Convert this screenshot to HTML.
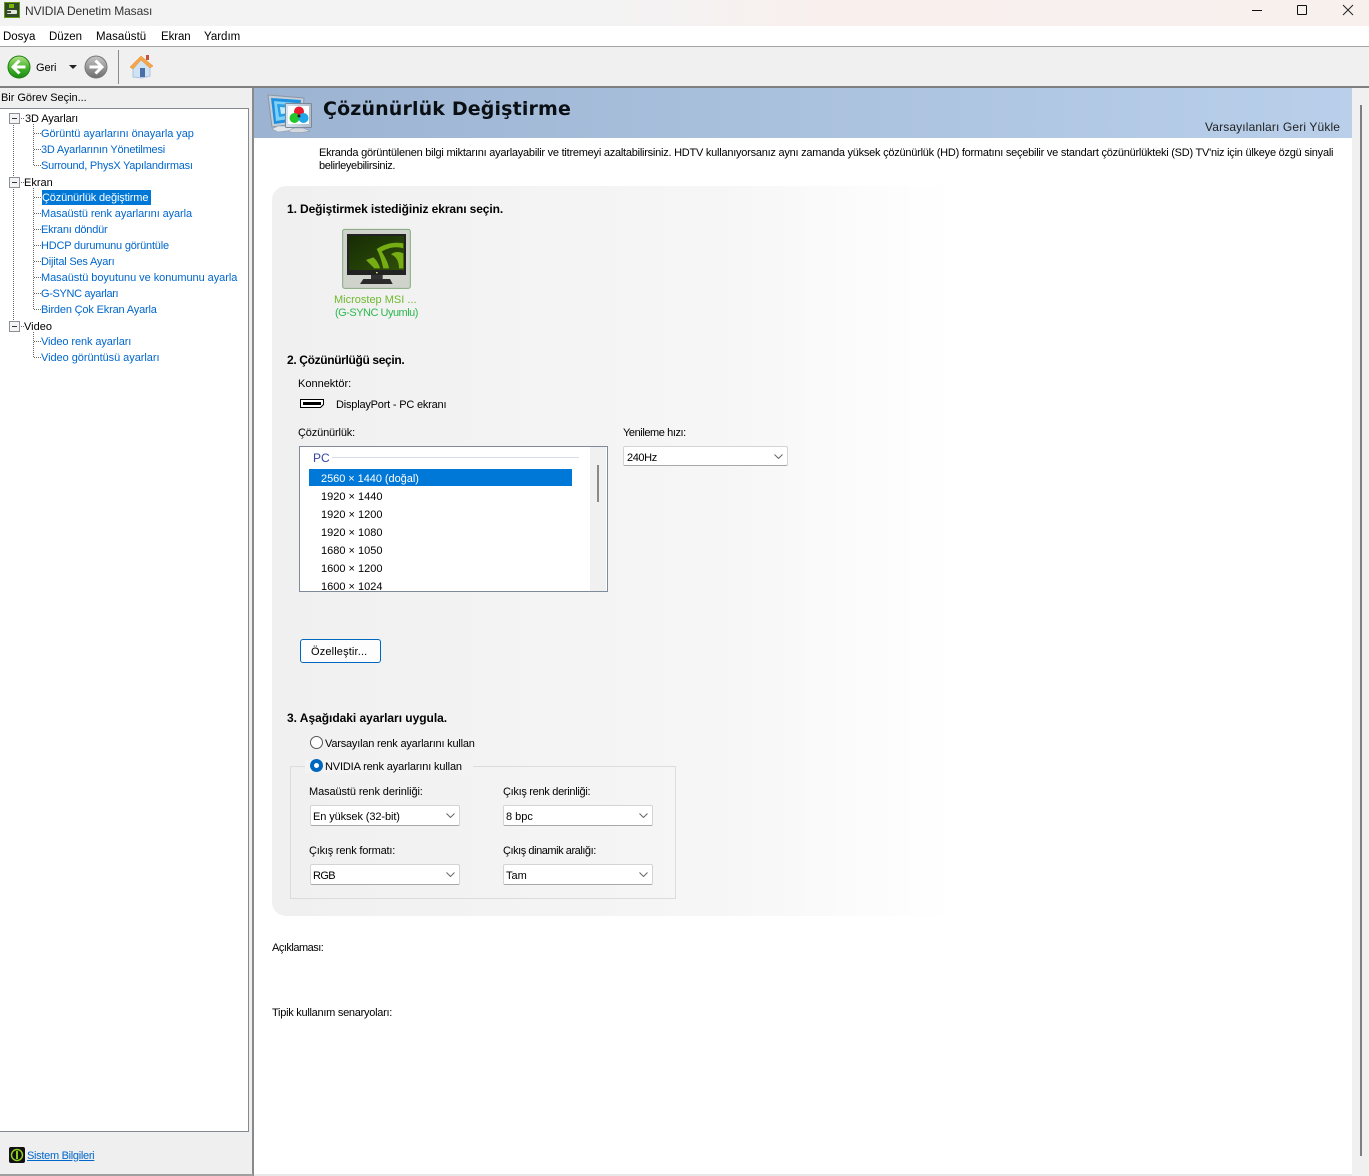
<!DOCTYPE html>
<html lang="tr"><head><meta charset="utf-8"><title>NVIDIA Denetim Masası</title>
<style>
html,body{margin:0;padding:0}
body{width:1369px;height:1176px;position:relative;overflow:hidden;background:#fff;font-family:"Liberation Sans",sans-serif;font-size:11px;color:#000}
div,a,svg{position:absolute}
.t{white-space:nowrap;line-height:16px;height:14px}
.b{color:#0066cc}
.m{font-size:11.500px}
.h{font-size:12px;font-weight:bold;letter-spacing:-.1px;line-height:14px}
.sel{background:#fff;border:1px solid #d4d4d4;border-bottom-color:#a8a8a8;border-radius:2px;height:20px;box-sizing:border-box}
.sel span{position:absolute;left:2px;top:4px;line-height:14px;white-space:nowrap}
.sel svg{right:4px;top:7px}
.dot{border-left:1px dotted #666}
.dh{border-top:1px dotted #666;height:0}
.pm{width:9px;height:9px;border:1px solid #8a8f98;background:#f4f4f4;box-sizing:content-box}
.pm:after{content:"";position:absolute;left:2px;top:4px;width:5px;height:1px;background:#333}
</style></head><body>
<!-- title bar -->
<div style="left:0;top:0;width:1369px;height:26px;background:linear-gradient(90deg,#f3f3f3 0,#f3f3f3 45%,#f9f0ee 60%,#f8f0ed 100%)"></div>
<svg style="left:4px;top:2px" width="16" height="16" viewBox="0 0 16 16"><rect x=".5" y=".5" width="15" height="15" fill="#33472a" stroke="#5f9a12"/><rect x="5" y="2" width="5" height="4" fill="#76b900"/><rect x="3" y="8" width="10" height="4" rx="1" fill="#dfe8d8"/><rect x="3" y="9" width="4" height="2" fill="#444"/></svg>
<div class="t" style="left:25px;top:4px;color:#333;font-size:12px;letter-spacing:-.1px;line-height:14px">NVIDIA Denetim Masası</div>
<div style="left:1252px;top:10px;width:10px;height:1px;background:#111"></div>
<div style="left:1297px;top:5px;width:8px;height:8px;border:1px solid #111;border-radius:1px"></div>
<svg style="left:1342px;top:4px" width="12" height="12" viewBox="0 0 12 12"><path d="M1 1L11 11M11 1L1 11" stroke="#222" stroke-width="1"/></svg>
<!-- menu -->
<div style="left:0;top:26px;width:1369px;background:#fff;border-bottom:1px solid #a4a4a4;box-sizing:border-box;height:21px"></div>
<div class="t m" style="left:3px;top:29px;letter-spacing:-.05px">Dosya</div>
<div class="t m" style="left:49px;top:29px;letter-spacing:-.05px">Düzen</div>
<div class="t m" style="left:96px;top:29px;letter-spacing:.05px">Masaüstü</div>
<div class="t m" style="left:161px;top:29px;letter-spacing:-.1px">Ekran</div>
<div class="t m" style="left:204px;top:29px">Yardım</div>
<!-- toolbar -->
<div style="left:0;top:47px;width:1369px;height:39px;background:#f0f0f0"></div>
<div style="left:0;top:86px;width:1369px;height:2px;background:#808080"></div>
<svg style="left:7px;top:55px" width="24" height="24" viewBox="0 0 24 24"><defs><linearGradient id="g" x1="0" y1="0" x2="0" y2="1"><stop offset="0" stop-color="#b4e48a"/><stop offset=".5" stop-color="#4ab52d"/><stop offset="1" stop-color="#178a12"/></linearGradient><linearGradient id="gr" x1="0" y1="0" x2="0" y2="1"><stop offset="0" stop-color="#c6c6c6"/><stop offset="1" stop-color="#6e6e6e"/></linearGradient><linearGradient id="scr" x1="0" y1="0" x2="1" y2="1"><stop offset="0" stop-color="#162c04"/><stop offset="1" stop-color="#2f4f0a"/></linearGradient><linearGradient id="bz" x1="0" y1="0" x2="1" y2="0"><stop offset="0" stop-color="#d8e6f2"/><stop offset="1" stop-color="#aebccb"/></linearGradient></defs><circle cx="12" cy="12" r="11" fill="url(#g)" stroke="#238018"/><path d="M12.500 5.500L6 12l6.500 6.500M6.500 12H18.500" fill="none" stroke="#fff" stroke-width="3"/></svg>
<div class="t" style="left:36px;top:60px;letter-spacing:-.1px">Geri</div>
<svg style="left:69px;top:65px" width="8" height="4"><path d="M0 0H8L4 4Z" fill="#222"/></svg>
<svg style="left:84px;top:55px" width="24" height="24" viewBox="0 0 24 24"><circle cx="12" cy="12" r="11" fill="url(#gr)" stroke="#777"/><path d="M11.500 5.500L18 12l-6.500 6.500M17.500 12H5.500" fill="none" stroke="#fff" stroke-width="3"/></svg>
<div style="left:118px;top:50px;width:1px;height:34px;background:#8a8a8a"></div>
<svg style="left:129px;top:54px" width="25" height="25" viewBox="0 0 25 25"><path d="M4 12V23L13 24L21 22V12L12.500 4Z" fill="#cfe3f5" stroke="#a9c4dc"/><path d="M1 13L12 2L24 12L21 14L12 6L4 15Z" fill="#f5a54a" stroke="#e0892e" stroke-width=".5"/><rect x="11" y="14" width="5" height="9" fill="#4a6ea8"/><rect x="17" y="1" width="3" height="5" fill="#c9503a"/></svg>
<!-- left pane -->
<div style="left:0;top:88px;width:253px;height:1088px;background:#efefef"></div>
<div class="t" style="left:1px;top:90px;letter-spacing:-.03px">Bir Görev Seçin...</div>
<div style="left:-1px;top:108px;width:248px;height:1022px;background:#fff;border:1px solid #858990"></div>
<div style="left:252px;top:88px;width:2px;height:1088px;background:#8a8a8a"></div>
<!-- tree lines -->
<div class="dot" style="left:13px;top:122px;height:204px"></div>
<div class="dot" style="left:33px;top:124px;height:41px"></div>
<div class="dot" style="left:33px;top:188px;height:121px"></div>
<div class="dot" style="left:33px;top:332px;height:25px"></div>
<div class="dh" style="left:34px;top:133px;width:7px"></div><div class="dh" style="left:34px;top:149px;width:7px"></div><div class="dh" style="left:34px;top:165px;width:7px"></div>
<div class="dh" style="left:34px;top:197px;width:7px"></div><div class="dh" style="left:34px;top:213px;width:7px"></div><div class="dh" style="left:34px;top:229px;width:7px"></div><div class="dh" style="left:34px;top:245px;width:7px"></div><div class="dh" style="left:34px;top:261px;width:7px"></div><div class="dh" style="left:34px;top:277px;width:7px"></div><div class="dh" style="left:34px;top:293px;width:7px"></div><div class="dh" style="left:34px;top:309px;width:7px"></div>
<div class="dh" style="left:34px;top:341px;width:7px"></div><div class="dh" style="left:34px;top:357px;width:7px"></div>
<div class="dh" style="left:19px;top:118px;width:5px"></div><div class="dh" style="left:19px;top:182px;width:5px"></div><div class="dh" style="left:19px;top:326px;width:5px"></div>
<div class="pm" style="left:9px;top:113px"></div><div class="pm" style="left:9px;top:177px"></div><div class="pm" style="left:9px;top:321px"></div>
<div class="t" style="left:25px;top:111px;letter-spacing:-.1px">3D Ayarları</div>
<div class="t b" style="left:41px;top:126px;letter-spacing:-.06px">Görüntü ayarlarını önayarla yap</div>
<div class="t b" style="left:41px;top:142px;letter-spacing:-.2px">3D Ayarlarının Yönetilmesi</div>
<div class="t b" style="left:41px;top:158px;letter-spacing:-.25px">Surround, PhysX Yapılandırması</div>
<div class="t" style="left:24px;top:175px">Ekran</div>
<div style="left:42px;top:190px;width:109px;height:15px;background:#0078d7"></div>
<div class="t" style="left:42px;top:190px;color:#fff;letter-spacing:-.15px">Çözünürlük değiştirme</div>
<div class="t b" style="left:41px;top:206px;letter-spacing:-.1px">Masaüstü renk ayarlarını ayarla</div>
<div class="t b" style="left:41px;top:222px;letter-spacing:-.2px">Ekranı döndür</div>
<div class="t b" style="left:41px;top:238px;letter-spacing:-.2px">HDCP durumunu görüntüle</div>
<div class="t b" style="left:41px;top:254px;letter-spacing:-.2px">Dijital Ses Ayarı</div>
<div class="t b" style="left:41px;top:270px;letter-spacing:-.05px">Masaüstü boyutunu ve konumunu ayarla</div>
<div class="t b" style="left:41px;top:286px;letter-spacing:-.35px">G-SYNC ayarları</div>
<div class="t b" style="left:41px;top:302px;letter-spacing:-.17px">Birden Çok Ekran Ayarla</div>
<div class="t" style="left:24px;top:319px">Video</div>
<div class="t b" style="left:41px;top:334px;letter-spacing:-.1px">Video renk ayarları</div>
<div class="t b" style="left:41px;top:350px;letter-spacing:-.05px">Video görüntüsü ayarları</div>
<svg style="left:9px;top:1147px" width="16" height="16" viewBox="0 0 16 16"><rect width="16" height="16" rx="2" fill="#111"/><circle cx="8" cy="8" r="5.500" fill="none" stroke="#8fce1e" stroke-width="1.500"/><rect x="7" y="4" width="2" height="8" fill="#8fce1e"/></svg>
<div class="t" style="left:27px;top:1148px;color:#0066cc;text-decoration:underline;letter-spacing:-.3px">Sistem Bilgileri</div>
<div style="left:0;top:1174px;width:253px;height:2px;background:#a0a0a0"></div>
<!-- banner -->
<div style="left:254px;top:88px;width:1098px;height:50px;background:linear-gradient(90deg,#9cb4d2,#b9cfea)"></div>
<svg style="left:266px;top:94px" width="48" height="40" viewBox="0 0 48 40"><path d="M2 1L38 4L36 29L6 33Z" fill="#c3ced9" stroke="#8b97a6"/><path d="M5 4L35 6L33 27L8 30Z" fill="#1f8fe0"/><path d="M8 7L31 9L29 24L10 27Z" fill="#7fd0f7"/><path d="M11 10L27 11L26 21L13 23Z" fill="#2aa0e6"/><path d="M14 13L24 14L23 19L15 20Z" fill="#c6ecfc"/><path d="M6 35L12 32H24L28 36L12 38Z" fill="#dfe5ea" stroke="#8b97a6" stroke-width=".5"/><rect x="19.500" y="9.500" width="26" height="24" rx="1" fill="url(#bz)" stroke="#7c8896"/><rect x="22" y="12" width="21" height="18" fill="#fff"/><circle cx="33" cy="17.500" r="5" fill="#e81c2c"/><circle cx="28.500" cy="24" r="5" fill="#22c52a"/><circle cx="37.500" cy="24" r="5" fill="#21a7e8"/><circle cx="33" cy="22" r="1.500" fill="#222"/><path d="M22 37L28 34H37L44 37L36 38.500H26Z" fill="#d3d9de" stroke="#8b97a6" stroke-width=".5"/></svg>
<div class="t" style="left:323px;top:95px;height:28px;line-height:28px;font-family:'DejaVu Sans',sans-serif;font-weight:bold;font-size:19px;letter-spacing:.14px;color:#0a0f14">Çözünürlük Değiştirme</div>
<div class="t" style="left:1205px;top:120px;color:#222;font-size:12px;letter-spacing:.14px;line-height:14px">Varsayılanları Geri Yükle</div>
<!-- scrollbar -->
<div style="left:1352px;top:88px;width:17px;height:1088px;background:#f0f0f0"></div>
<div style="left:1360px;top:105px;width:2px;height:1051px;background:#7f7f7f"></div>
<!-- description -->
<div class="t" style="left:319px;top:145px;letter-spacing:-.24px">Ekranda görüntülenen bilgi miktarını ayarlayabilir ve titremeyi azaltabilirsiniz. HDTV kullanıyorsanız aynı zamanda yüksek çözünürlük (HD) formatını seçebilir ve standart çözünürlükteki (SD) TV'niz için ülkeye özgü sinyali</div>
<div class="t" style="left:319px;top:158px;letter-spacing:-.35px">belirleyebilirsiniz.</div>
<!-- panel -->
<div style="left:272px;top:186px;width:680px;height:730px;border-radius:14px 0 0 14px;background:linear-gradient(90deg,#f0f0f0 0,#f6f6f6 65%,#fff 100%)"></div>
<div class="t h" style="left:287px;top:202px">1. Değiştirmek istediğiniz ekranı seçin.</div>
<svg style="left:335px;top:225px" width="85" height="70" viewBox="0 0 255 210"><rect x="23" y="13" width="203" height="177" rx="6" fill="#cfd3cc" stroke="#84a87c" stroke-width="3"/><rect x="36" y="27" width="177" height="123" fill="#222"/><rect x="42" y="33" width="165" height="102" fill="url(#scr)"/><path d="M125 72C150 55 180 50 205 55V70C180 62 155 70 140 80C150 95 160 115 162 130H145C140 110 135 90 125 72Z" fill="#76ad12"/><path d="M168 88C180 78 195 80 205 85V130H192C192 110 185 95 168 88Z" fill="#76ad12"/><path d="M93 105L115 97C125 105 132 118 135 130H118Z" fill="#76ad12"/><rect x="123" y="141" width="5" height="4" fill="#e8e070"/><rect x="108" y="150" width="35" height="12" fill="#333"/><path d="M75 177L85 162H165L173 177Z" fill="#2b2b2b"/></svg>
<div class="t" style="left:334px;top:292px;color:#6fb92e">Microstep MSI ...</div>
<div class="t" style="left:335px;top:305px;color:#2db84d;letter-spacing:-.5px">(G-SYNC Uyumlu)</div>
<div class="t h" style="left:287px;top:353px;letter-spacing:-.35px">2. Çözünürlüğü seçin.</div>
<div class="t" style="left:298px;top:376px">Konnektör:</div>
<svg style="left:300px;top:399px" width="24" height="9"><path d="M.5 .5H23.500V5.500L20.500 8.500H.5Z" fill="#fff" stroke="#000"/><rect x="3" y="3" width="18" height="3" fill="#000"/></svg>
<div class="t" style="left:336px;top:397px;letter-spacing:-.2px">DisplayPort - PC ekranı</div>
<div class="t" style="left:298px;top:425px;letter-spacing:-.15px">Çözünürlük:</div>
<div class="t" style="left:623px;top:425px;letter-spacing:-.42px">Yenileme hızı:</div>
<div style="left:299px;top:446px;width:307px;height:144px;background:#fff;border:1px solid #7f8a9a"></div>
<div style="left:590px;top:447px;width:16px;height:144px;background:#f0f0f0"></div>
<div style="left:597px;top:465px;width:2px;height:37px;background:#8a8a8a"></div>
<div class="t" style="left:313px;top:451px;color:#3344aa;font-size:12px;letter-spacing:0;line-height:14px">PC</div>
<div style="left:332px;top:457px;width:247px;height:1px;background:#d6dcef"></div>
<div style="left:309px;top:469px;width:263px;height:17px;background:#0078d7"></div>
<div class="t" style="left:321px;top:471px;color:#fff;letter-spacing:-.05px">2560 × 1440 (doğal)</div>
<div class="t" style="left:321px;top:489px">1920 × 1440</div>
<div class="t" style="left:321px;top:507px">1920 × 1200</div>
<div class="t" style="left:321px;top:525px">1920 × 1080</div>
<div class="t" style="left:321px;top:543px">1680 × 1050</div>
<div class="t" style="left:321px;top:561px">1600 × 1200</div>
<div style="left:300px;top:579px;width:290px;height:11px;overflow:hidden"><div class="t" style="left:21px;top:0">1600 × 1024</div></div>
<div class="sel" style="left:623px;top:446px;width:165px"><span style="left:3px;letter-spacing:-.4px">240Hz</span><svg width="9" height="5"><path d="M.5 .5L4.500 4.500L8.500 .5" fill="none" stroke="#666"/></svg></div>
<div style="left:300px;top:639px;width:79px;height:22px;border:1px solid #0067c0;border-radius:3px;background:#fdfdfd"></div>
<div class="t" style="left:311px;top:644px;letter-spacing:.15px">Özelleştir...</div>
<div class="t h" style="left:287px;top:711px;letter-spacing:-.03px">3. Aşağıdaki ayarları uygula.</div>
<div style="left:310px;top:736px;width:11px;height:11px;border:1px solid #555;border-radius:50%;background:#fff"></div>
<div class="t" style="left:325px;top:736px;letter-spacing:-.2px">Varsayılan renk ayarlarını kullan</div>
<div style="left:290px;top:766px;width:384px;height:131px;border:1px solid #dcdcdc"></div>
<div style="left:305px;top:760px;width:168px;height:13px;background:#f3f3f3"></div>
<div style="left:310px;top:759px;width:13px;height:13px;border-radius:50%;background:#0067c0"></div>
<div style="left:314px;top:763px;width:5px;height:5px;border-radius:50%;background:#fff"></div>
<div class="t" style="left:325px;top:759px;letter-spacing:-.15px">NVIDIA renk ayarlarını kullan</div>
<div class="t" style="left:309px;top:784px;letter-spacing:-.1px">Masaüstü renk derinliği:</div>
<div class="t" style="left:503px;top:784px;letter-spacing:-.3px">Çıkış renk derinliği:</div>
<div class="sel" style="left:310px;top:805px;width:150px;height:21px"><span style="letter-spacing:-.1px">En yüksek (32-bit)</span><svg width="9" height="5"><path d="M.5 .5L4.500 4.500L8.500 .5" fill="none" stroke="#666"/></svg></div>
<div class="sel" style="left:503px;top:805px;width:150px;height:21px"><span>8 bpc</span><svg width="9" height="5"><path d="M.5 .5L4.500 4.500L8.500 .5" fill="none" stroke="#666"/></svg></div>
<div class="t" style="left:309px;top:843px;letter-spacing:-.2px">Çıkış renk formatı:</div>
<div class="t" style="left:503px;top:843px;letter-spacing:-.45px">Çıkış dinamik aralığı:</div>
<div class="sel" style="left:310px;top:864px;width:150px;height:21px"><span style="letter-spacing:-.6px">RGB</span><svg width="9" height="5"><path d="M.5 .5L4.500 4.500L8.500 .5" fill="none" stroke="#666"/></svg></div>
<div class="sel" style="left:503px;top:864px;width:150px;height:21px"><span>Tam</span><svg width="9" height="5"><path d="M.5 .5L4.500 4.500L8.500 .5" fill="none" stroke="#666"/></svg></div>
<div class="t" style="left:272px;top:940px;letter-spacing:-.5px">Açıklaması:</div>
<div class="t" style="left:272px;top:1005px;letter-spacing:-.27px">Tipik kullanım senaryoları:</div>
<div style="left:254px;top:1174px;width:1098px;height:2px;background:#e8e8e8"></div>
</body></html>
